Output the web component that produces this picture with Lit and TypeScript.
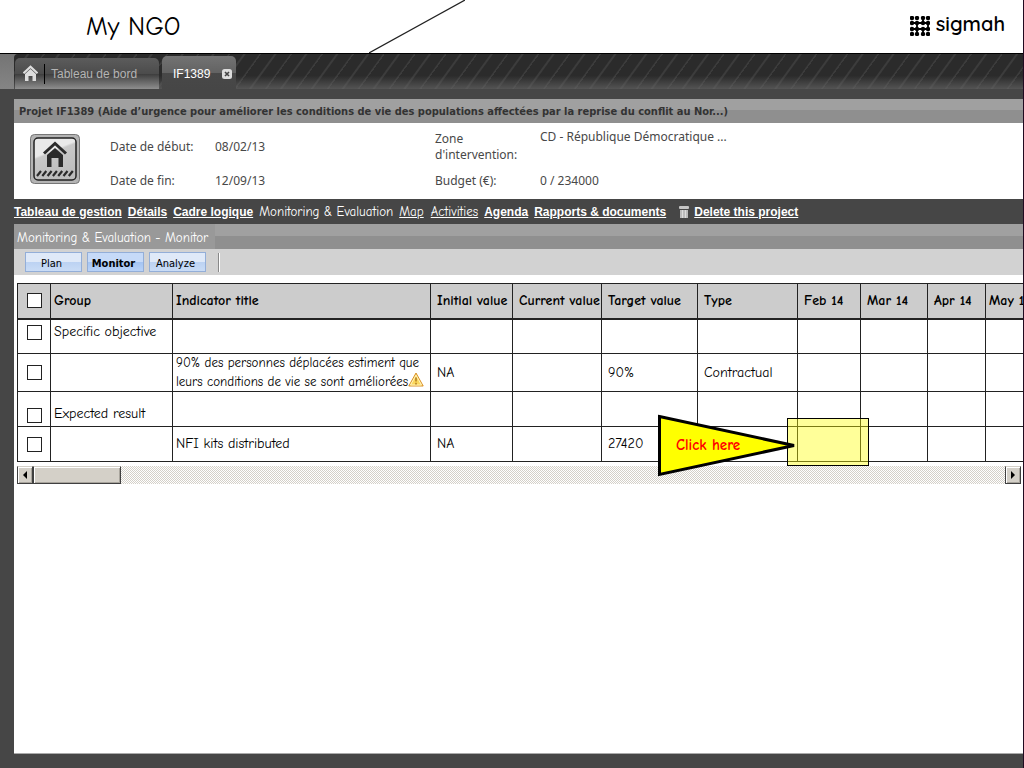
import { LitElement, html, css, svg } from "lit";
import { customElement, property } from "lit/decorators.js";
import { classMap } from "lit/directives/class-map.js";

type Row = {
  group: string;
  title: string;
  initial: string;
  target: string;
  type: string;
  align: "top" | "middle" | "bottom";
  warning?: boolean;
  guided?: boolean;
};

const MONTHS = ["Feb 14", "Mar 14", "Apr 14", "May 14"];

const ROWS: Row[] = [
  { group: "Specific objective", title: "", initial: "", target: "", type: "", align: "top" },
  {
    group: "",
    title: "90% des personnes déplacées estiment que leurs conditions de vie se sont améliorées",
    initial: "NA",
    target: "90%",
    type: "Contractual",
    align: "middle",
    warning: true,
  },
  { group: "Expected result", title: "", initial: "", target: "", type: "", align: "bottom" },
  { group: "", title: "NFI kits distributed", initial: "NA", target: "27420", type: "", align: "middle", guided: true },
];

@customElement("page-header")
class PageHeader extends LitElement {
  static styles = css`
    :host {
      display: block;
    }
    .header {
      position: relative;
      display: flex;
      align-items: center;
      justify-content: space-between;
      height: 53px;
      padding: 0 18px 0 86px;
      background: #fff;
      border-bottom: 1px solid #000;
      color: #000;
    }
    .title {
      margin: 0;
      font: 400 26px/52px "Comic Sans MS", "Comic Neue", "Open Sans", sans-serif;
    }
    .slash {
      position: absolute;
      left: 369px;
      top: 0;
    }
    .brand {
      display: flex;
      align-items: center;
      gap: 6px;
      font: 600 20px/26px Quicksand, Lato, sans-serif;
      padding-bottom: 6px;
    }
    .mark {
      margin-top: 4px;
    }
  `;

  render() {
    const at = [2, 7, 13, 18];
    return html`
      <header class="header">
        <h1 class="title">My NGO</h1>
        <svg class="slash" width="96" height="53" aria-hidden="true">
          <path d="M0 53 96 0" stroke="#222" stroke-width="1.2" />
        </svg>
        <div class="brand">
          <svg class="mark" width="20" height="20" aria-hidden="true">
            ${at.map((x) => at.map((y) => svg`<circle cx=${x} cy=${y} r="2.2" />`))}
            <path d="M7 7V13M13 2V7M18 7v6M7 13v5M13 13v5M2 7h16M2 13h16" stroke="#000" stroke-width="1.8" />
          </svg>
          <span>sigmah</span>
        </div>
      </header>
    `;
  }
}

@customElement("tab-strip")
class TabStrip extends LitElement {
  static styles = css`
    :host {
      display: block;
    }
    .strip {
      display: flex;
      align-items: flex-end;
      gap: 3px;
      height: 35px;
      padding-left: 1px;
      margin-left: 14px;
      background: linear-gradient(#0000 62%, #686868aa), repeating-linear-gradient(126deg, #2b2b2b 0 10px, #3c3c3c 11px 12px, #2b2b2b 13px 23px, #3c3c3c 24px 25px);
      border-top-left-radius: 4px;
    }
    .bar {
      background: linear-gradient(#747474, #858585);
    }
    .tab {
      display: flex;
      align-items: center;
      box-sizing: border-box;
      font: 12px/16px "Liberation Sans", Arial, sans-serif;
      border-radius: 5px 5px 0 0;
      text-decoration: none;
    }
    .home {
      width: 144px;
      height: 31px;
      padding-left: 8px;
      color: #b4b4b4;
      background: linear-gradient(#5c5c5c, #4c4c4c 50%, #3c3c3c 51%, #8e8e8e);
    }
    .sep {
      width: 1px;
      height: 20px;
      margin: 0 6px;
      background: #000;
    }
    .current {
      height: 33px;
      padding: 2px 4px 0 11px;
      gap: 12px;
      color: #fff;
      background: linear-gradient(#737373, #636363 50%, #484848 51%, #464646);
    }
    .close {
      display: block;
      padding: 0;
      border: 0;
      background: none;
      line-height: 0;
    }
  `;

  render() {
    return html`
      <div class="bar">
        <nav class="strip">
          <a class="tab home" href="#">
            <svg width="15" height="17" viewBox="0 0 15 17" aria-hidden="true">
              <path d="M.5 8.200 7.500 1.800 14.500 8.200" fill="none" stroke="#ddd" stroke-width="2.200" />
              <path d="M2 9 7.500 4 13 9V16H9.500V11h-4v5H2z" fill="#ddd" />
            </svg>
            <span class="sep"></span>
            <span>Tableau de bord</span>
          </a>
          <div class="tab current">
            <span>IF1389</span>
            <button class="close" aria-label="Close IF1389">
              <svg width="10" height="10" viewBox="0 0 10 10">
                <rect width="10" height="10" rx="2.500" fill="#ddd" />
                <path d="M3 3 7 7M7 3 3 7" stroke="#444" stroke-width="1.600" />
              </svg>
            </button>
          </div>
        </nav>
      </div>
    `;
  }
}

@customElement("project-summary")
class ProjectSummary extends LitElement {
  static styles = css`
    :host {
      display: block;
      font: 12px/16px "Noto Sans", Tahoma, sans-serif;
    }
    .title {
      margin: 0;
      padding: 0 5px;
      font: 700 11px/26px "DejaVu Sans Condensed", Tahoma, sans-serif;
      height: 24px;
      box-sizing: border-box;
      color: #333;
      white-space: nowrap;
      overflow: hidden;
      background: linear-gradient(#a0a0a0 46%, #8f8f8f 46%);
    }
    .facts {
      display: grid;
      grid-template-columns: 80px 105px 220px 105px 1fr;
      grid-template-rows: 36px 32px;
      align-items: center;
      box-sizing: border-box;
      height: 76px;
      padding: 6px 0 0 16px;
      background: #fff;
      color: #484848;
    }
    .icon {
      grid-row: 1 / 3;
      align-self: start;
      margin-top: 5px;
    }
    .narrow {
      width: 84px;
    }
    .raised {
      align-self: start;
    }
  `;

  render() {
    return html`
      <h2 class="title">
        Projet IF1389 (Aide d’urgence pour améliorer les conditions de vie des populations affectées par la reprise du
        conflit au Nor...)
      </h2>
      <div class="facts">
        <svg class="icon" width="50" height="50" viewBox="0 0 50 50" aria-hidden="true">
          <defs>
            <linearGradient id="g" x1="0" y1="0" x2="0.4" y2="1">
              <stop offset="0.4" stop-color="#e9e9e9" />
              <stop offset="0.45" stop-color="#c9c9c9" />
              <stop offset="1" stop-color="#bdbdbd" />
            </linearGradient>
          </defs>
          <rect x=".5" y=".5" width="49" height="49" rx="4" fill="#b4b4b4" stroke="#777" />
          <rect x="4" y="4" width="42" height="42" rx="4" fill="url(#g)" stroke="#222" stroke-width="1.500" />
          <path d="M14 19.500 25 9.500 36 19.500" fill="none" stroke="#2b2b2b" stroke-width="3" />
          <path d="M17 21 25 14 33 21V33H28.500V24h-7V33H17z" fill="#2b2b2b" />
          <path
            d="m7 42 4-5m1.300 5 4-5m1.300 5 4-5m1.300 5 4-5m1.300 5 4-5m1.300 5 4-5m1.300 5 4-5"
            stroke="#2b2b2b"
            stroke-width="2.200"
            fill="none"
          />
        </svg>
        <span>Date de début:</span><span>08/02/13</span>
        <span class="narrow">Zone d'intervention:</span><span class="raised">CD - République Démocratique ...</span>
        <span>Date de fin:</span><span>12/09/13</span>
        <span>Budget (€):</span><span>0 / 234000</span>
      </div>
    `;
  }
}

@customElement("project-nav")
class ProjectNav extends LitElement {
  static styles = css`
    :host {
      display: block;
    }
    .nav {
      display: flex;
      align-items: center;
      gap: 6px;
      height: 25px;
      white-space: nowrap;
      font: 700 12px/16px "Liberation Sans", Arial, sans-serif;
      color: #fff;
    }
    .link {
      color: #fff;
    }
    .hand {
      font: 400 13px/16px "Comic Sans MS", "Comic Neue", "Open Sans", sans-serif;
    }
    .pair {
      display: flex;
      gap: 7px;
    }
    .delete {
      display: flex;
      align-items: center;
      gap: 5px;
      margin-left: 7px;
    }
  `;

  render() {
    return html`
      <nav class="nav">
        <a class="link" href="#">Tableau de gestion</a>
        <a class="link" href="#">Détails</a>
        <a class="link" href="#">Cadre logique</a>
        <span class="hand">Monitoring &amp; Evaluation</span>
        <span class="pair">
          <a class="link hand" href="#">Map</a>
          <a class="link hand" href="#">Activities</a>
        </span>
        <a class="link" href="#">Agenda</a>
        <a class="link" href="#">Rapports &amp; documents</a>
        <span class="delete">
          <svg width="10" height="12" viewBox="0 0 10 12" aria-hidden="true">
            <rect width="10" height="3" rx="1" fill="#c4c4c4" />
            <path d="M1 4h8v8H1z" fill="#bbb" />
            <path d="M3.500 4v8M6.500 4v8" stroke="#ddd" />
          </svg>
          <a class="link" href="#">Delete this project</a>
        </span>
      </nav>
    `;
  }
}

@customElement("indicator-grid")
class IndicatorGrid extends LitElement {
  @property({ attribute: false }) rows: Row[] = [];

  static styles = css`
    :host {
      display: block;
      padding: 8px 0 0 3px;
    }
    .scroller {
      overflow-x: clip;
      overflow-y: visible;
    }
    .grid {
      position: relative;
      z-index: 1;
      table-layout: fixed;
      width: 1030px;
      border-collapse: collapse;
      font: 14px/18px "Comic Sans MS", "Comic Neue", "Open Sans", sans-serif;
      color: #000;
    }
    .c-check { width: 33px; }
    .c-group { width: 122px; }
    .c-title { width: 258px; }
    .c-initial { width: 82px; }
    .c-current { width: 89px; }
    .c-target { width: 96px; }
    .c-type { width: 100px; }
    .c-month { width: 63px; }
    .c-month:nth-child(9) { width: 67px; }
    .c-month:nth-child(10) { width: 58px; }
    .head,
    .cell {
      box-sizing: border-box;
      height: 35px;
      padding: 0 0 0 6px;
      border: 1px solid #222;
      text-align: left;
      white-space: nowrap;
    }
    .head {
      background: #ccc;
      border-bottom-width: 2px;
      font-weight: 700;
    }
    .tight,
    .head:last-child {
      padding-left: 3px;
    }
    .wrap {
      white-space: normal;
    }
    .long {
      font-size: 13px;
    }
    .top {
      vertical-align: top;
      padding-top: 3px;
    }
    .bottom {
      vertical-align: bottom;
      padding-bottom: 3px;
    }
    .check {
      padding-left: 9px;
      line-height: 0;
    }
    .check.top {
      padding-top: 5px;
    }
    .box {
      appearance: none;
      box-sizing: border-box;
      width: 15px;
      height: 15px;
      margin: 0;
      border: 1px solid #222;
      background: #fff;
    }
    .warn {
      vertical-align: -1px;
    }
    .guided {
      position: relative;
    }
    .target {
      position: absolute;
      inset: -9px -9px -5px -11px;
      border: 1px solid #000;
      background: #ffff0066;
    }
    .callout {
      position: absolute;
      left: -141px;
      top: -14px;
      width: 140px;
      height: 64px;
      display: flex;
      align-items: center;
      box-sizing: border-box;
      padding-left: 19px;
      color: #f00;
      font-size: 15px;
      font-weight: 700;
    }
    .arrow {
      position: absolute;
      inset: 0;
    }
    .label {
      position: relative;
    }
    .scrollbar {
      display: flex;
      height: 18px;
      margin: 4px 2px 0 0;
      background: repeating-conic-gradient(#d4d0c8 0 25%, #fff 0 50%) 0 0 / 2px 2px;
    }
    .step,
    .thumb {
      box-sizing: border-box;
      height: 18px;
      padding: 0;
      background: #d4d0c8;
      border: 1px solid #404040;
      border-top-color: #d4d0c8;
      box-shadow: inset 1px 1px #fff, inset -1px -1px #a8a49c;
    }
    .step {
      width: 16px;
      line-height: 0;
    }
    .thumb {
      width: 88px;
    }
    .space {
      flex: 1;
    }
  `;

  private text(value: string, row: Row, tight = false) {
    return html`<td class=${classMap({ cell: true, tight, [row.align]: true })}>${value}</td>`;
  }

  render() {
    return html`
      <div class="scroller">
        <table class="grid">
          <colgroup>
            <col class="c-check" />
            <col class="c-group" />
            <col class="c-title" />
            <col class="c-initial" />
            <col class="c-current" />
            <col class="c-target" />
            <col class="c-type" />
            ${MONTHS.map(() => html`<col class="c-month" />`)}
          </colgroup>
          <thead>
            <tr>
              <th class="head check"><input class="box" type="checkbox" aria-label="Select all" /></th>
              <th class="head tight">Group</th>
              <th class="head tight">Indicator title</th>
              <th class="head">Initial value</th>
              <th class="head">Current value</th>
              <th class="head">Target value</th>
              <th class="head">Type</th>
              ${MONTHS.map((m) => html`<th class="head">${m}</th>`)}
            </tr>
          </thead>
          <tbody>
            ${this.rows.map(
              (row) => html`
                <tr>
                  <td class=${classMap({ cell: true, check: true, [row.align]: true })}>
                    <input class="box" type="checkbox" aria-label="Select ${row.group || row.title}" />
                  </td>
                  ${this.text(row.group, row, true)}
                  <td class=${classMap({ cell: true, tight: true, wrap: true, long: row.title.length > 40 })}>
                    ${row.title}${row.warning
                      ? html`<svg class="warn" width="16" height="15" viewBox="0 0 16 15" role="img" aria-label="Warning">
                          <path d="M8 1 15.200 14H.8z" fill="#fbd75c" stroke="#d9902a" stroke-linejoin="round" />
                          <path d="M8 3.200 13.500 13H2.500z" fill="none" stroke="#fff3c0" />
                          <path d="M8 5.500v4M8 10.800v1.600" stroke="#b07a20" stroke-width="1.500" />
                        </svg>`
                      : ""}
                  </td>
                  ${this.text(row.initial, row)} ${this.text("", row)} ${this.text(row.target, row)}
                  ${this.text(row.type, row)}
                  ${MONTHS.map((_, i) =>
                    row.guided && i === 0
                      ? html`<td class="cell guided">
                          <div class="target"></div>
                          <div class="callout">
                            <svg class="arrow" width="140" height="64" aria-hidden="true">
                              <path d="M2.500 3.500 137 32.500 2.500 61.500z" fill="#ff0" stroke="#000" stroke-width="3" />
                            </svg>
                            <span class="label">Click here</span>
                          </div>
                        </td>`
                      : html`<td class="cell"></td>`
                  )}
                </tr>
              `
            )}
          </tbody>
        </table>
      </div>
      <div class="scrollbar">
        <button class="step" aria-label="Scroll left">
          <svg width="8" height="8"><path d="M6 0v8L2 4z" /></svg>
        </button>
        <div class="thumb"></div>
        <div class="space"></div>
        <button class="step" aria-label="Scroll right">
          <svg width="8" height="8"><path d="M2 0v8l4-4z" /></svg>
        </button>
      </div>
    `;
  }
}

@customElement("app-root")
class AppRoot extends LitElement {
  static styles = css`
    :host {
      display: flex;
      flex-direction: column;
      box-sizing: border-box;
      min-height: 100vh;
      background: #464646;
      border-right: 1px solid #200a20;
    }
    .body {
      flex: 1;
      display: flex;
      flex-direction: column;
      min-width: 0;
      padding: 10px 0 14px 14px;
    }
    .heading {
      box-sizing: border-box;
      height: 25px;
      background: linear-gradient(#a0a0a0 48%, #8f8f8f 48%);
    }
    .caption {
      display: inline-block;
      margin: 0;
      padding: 2px 7px 0 3px;
      background: #999;
      color: #fff;
      font: 400 13px/23px "Comic Sans MS", "Comic Neue", "Open Sans", sans-serif;
    }
    .tools {
      display: flex;
      align-items: center;
      gap: 5px;
      height: 26px;
      padding-left: 11px;
      background: #d2d2d2;
    }
    .tool {
      box-sizing: border-box;
      width: 57px;
      height: 20px;
      padding: 3px 4px 0 0;
      border: 1px solid #93aed8;
      background: linear-gradient(#dfe9f8 50%, #bcd2f2 50%, #c9dcf6);
      font: 11px/13px "DejaVu Sans Condensed", Tahoma, sans-serif;
      color: #000;
    }
    .pressed {
      font-weight: 700;
      background: linear-gradient(#c6daf8 50%, #a4c4f2 50%, #b8d2f8);
    }
    .rule {
      width: 1px;
      height: 19px;
      margin-left: 7px;
      background: #888;
      border-right: 1px solid #fff;
    }
    .sheet {
      flex: 1;
      min-width: 0;
      background: #fff;
      border-bottom: 1px solid #aaa;
    }
  `;

  render() {
    return html`
      <page-header></page-header>
      <tab-strip></tab-strip>
      <main class="body">
        <project-summary></project-summary>
        <project-nav></project-nav>
        <div class="heading"><h3 class="caption">Monitoring &amp; Evaluation - Monitor</h3></div>
        <div class="tools">
          <button class="tool">Plan</button>
          <button class="tool pressed">Monitor</button>
          <button class="tool">Analyze</button>
          <span class="rule"></span>
        </div>
        <section class="sheet"><indicator-grid .rows=${ROWS}></indicator-grid></section>
      </main>
    `;
  }
}
